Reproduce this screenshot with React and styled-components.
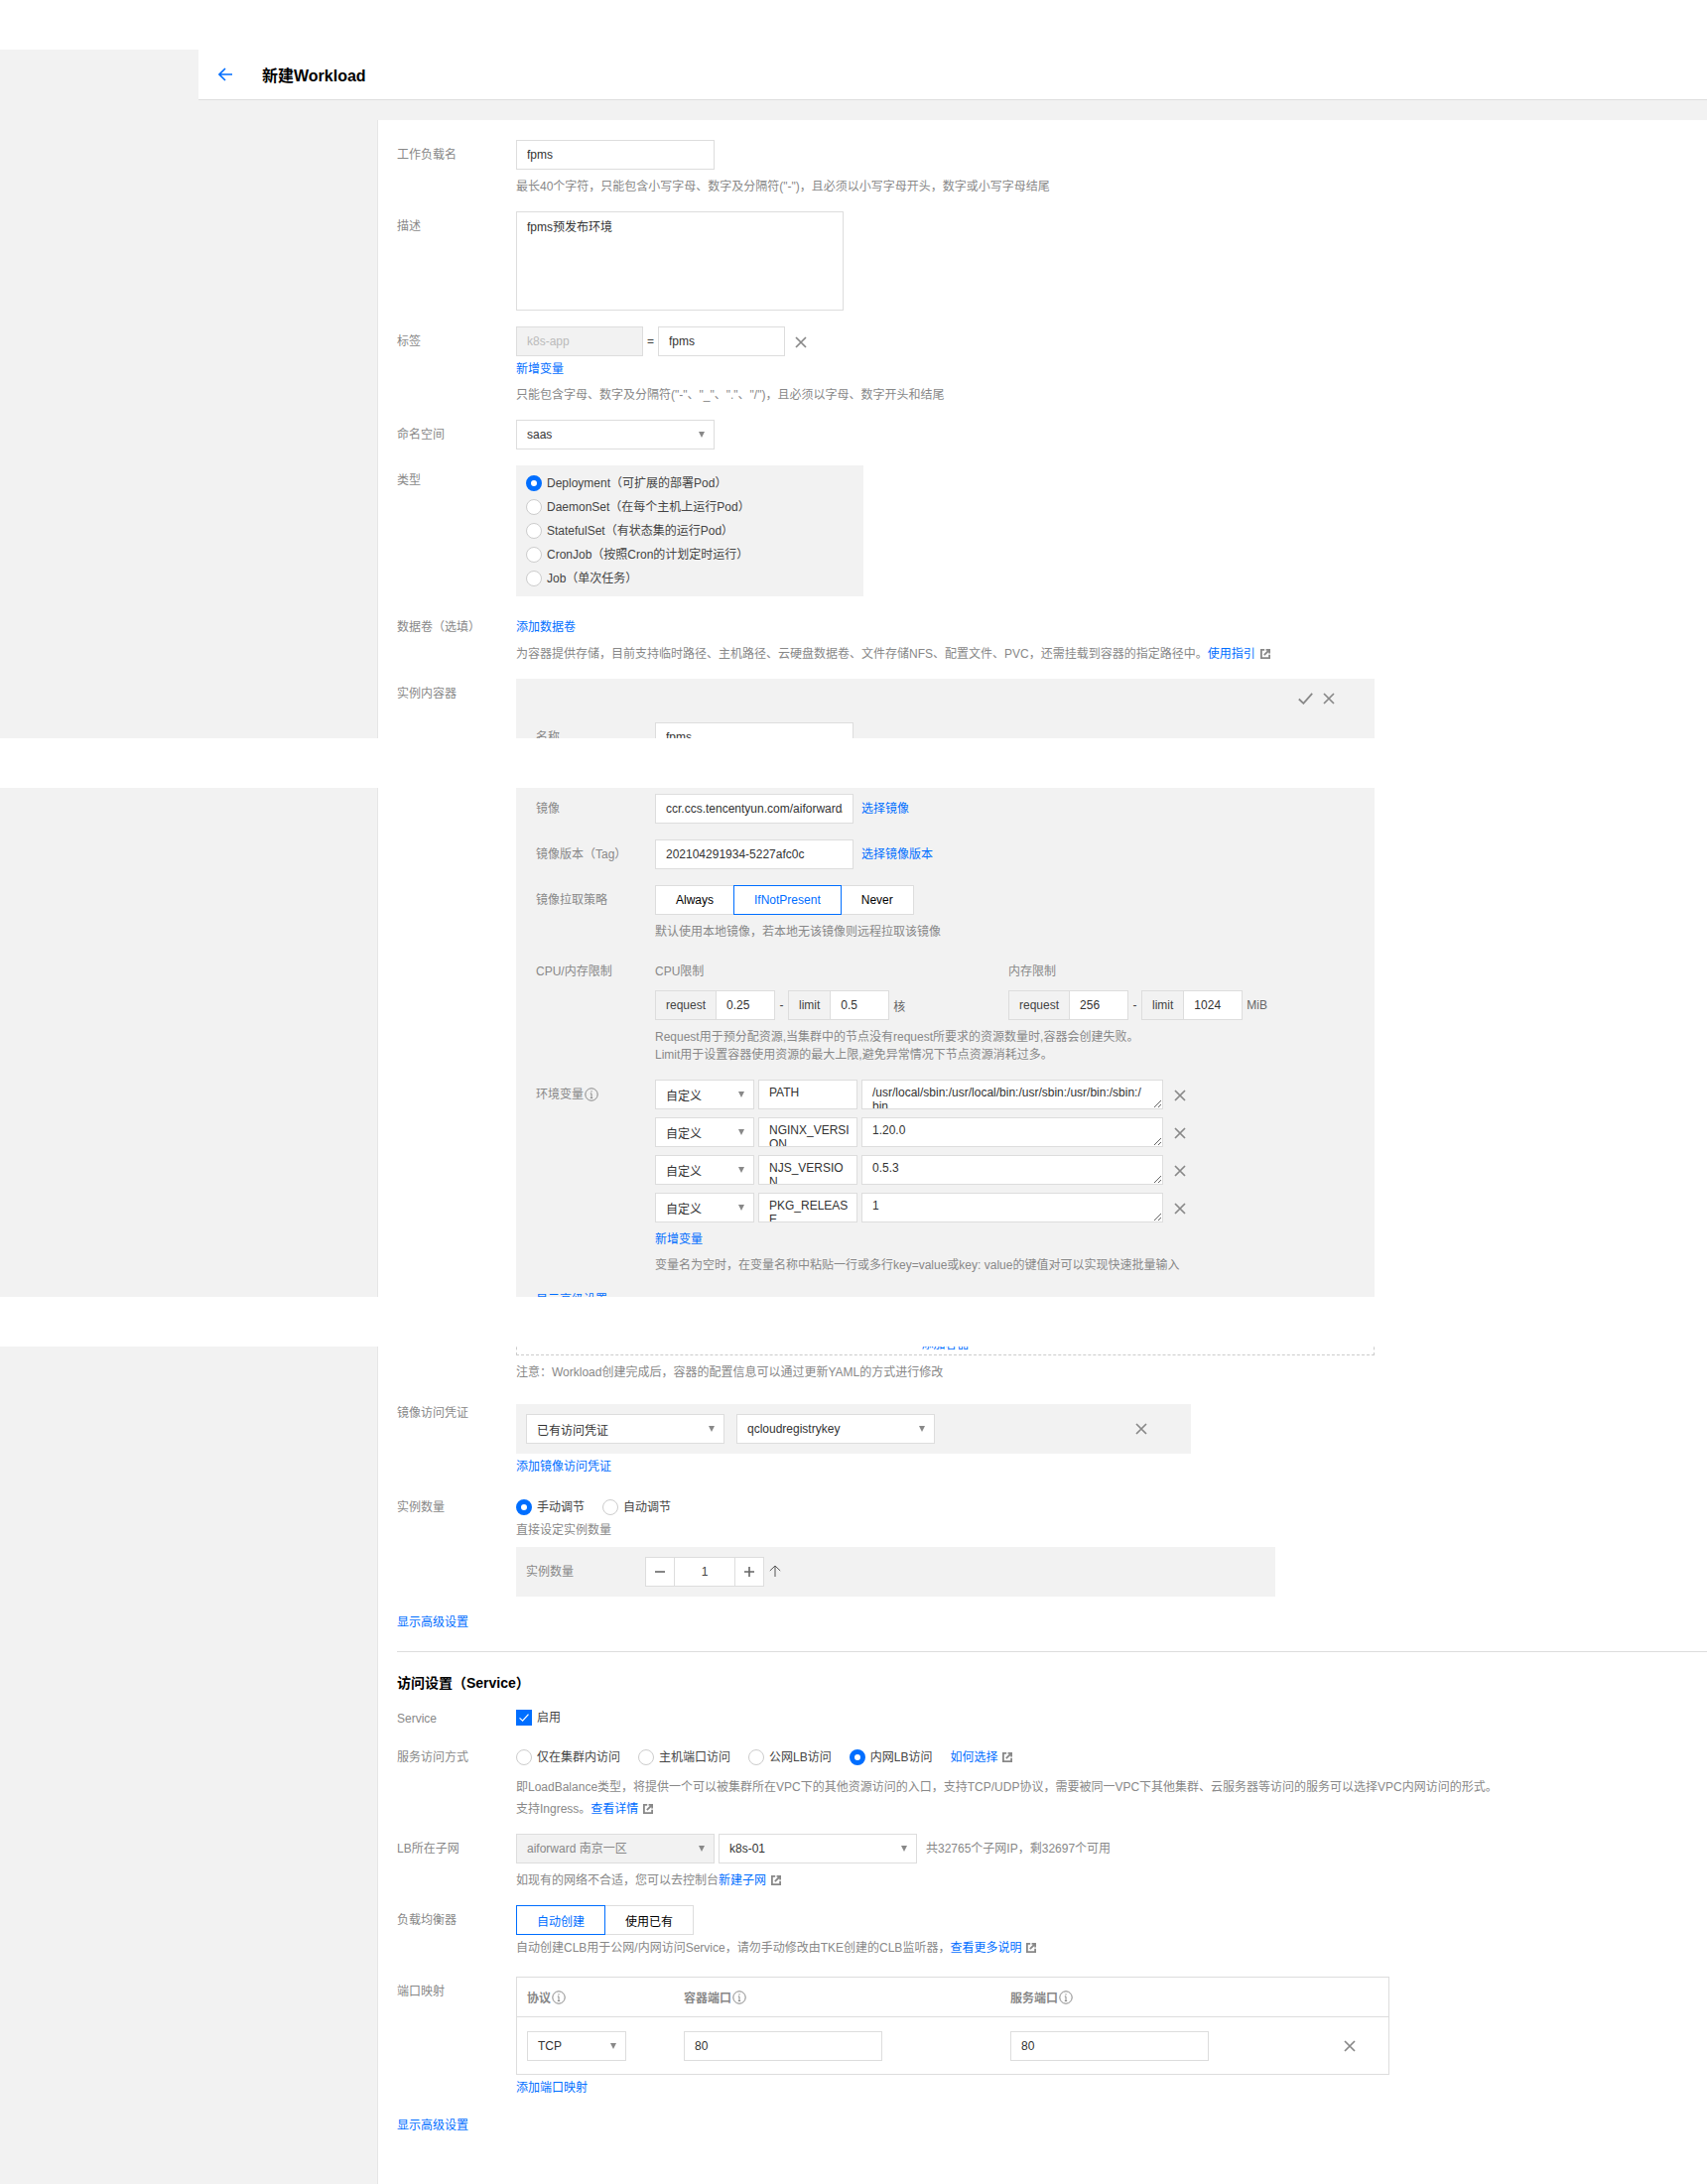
import React from 'react';
import styled, { createGlobalStyle } from 'styled-components';

const GlobalStyle = createGlobalStyle`
  html, body {
    margin: 0;
    padding: 0;
    background: #fff;
  }

  body {
    font-family: "Liberation Sans", "Noto Sans CJK SC", sans-serif;
    font-size: 12px;
    color: #444;
  }

  *, *::before, *::after {
    box-sizing: border-box;
  }
`;

const Page = styled.div`
  width: 1720px;
  height: 2201px;
  display: flex;
  flex-direction: column;
  overflow: hidden;
`;

const TopBlank = styled.div`
  height: 50px;
  flex: none;
  background: #fff;
`;

const Band = styled.div`
  height: 50px;
  flex: none;
  background: #fff;
`;

// one captured piece of the long page, cut off at its own height
const Slice = styled.section`
  flex: none;
  height: ${(p) => p.$height}px;
  overflow: hidden;
  background: #f2f2f2;
  padding-left: ${(p) => p.$left}px;
`;

const Header = styled.header`
  height: 51px;
  display: flex;
  align-items: center;
  background: #fff;
  border-bottom: 1px solid #ddd;
  padding-left: 20px;
`;

const BackButton = styled.a`
  display: flex;
  width: 14px;
  height: 14px;
  margin-right: 30px;
  color: #006eff;
`;

const Title = styled.h1`
  margin: 0 0 1px;
  font-size: 16px;
  font-weight: 700;
  color: #000;
`;

const Body = styled.div`
  padding: 20px 0 0 180px;
`;

const Panel = styled.main`
  background: #fff;
  border-left: 1px solid #e6e6e6;
  padding: ${(p) => p.$top || 0}px 0 2000px 19px;
`;

const Row = styled.div`
  display: grid;
  grid-template-columns: 120px 1fr;
  margin-top: ${(p) => p.$top || 0}px;
`;

const Label = styled.label`
  color: #888;
  line-height: ${(p) => p.$lh || 30}px;
  display: flex;
  align-items: ${(p) => (p.$lh ? 'flex-start' : 'center')};
  align-self: start;
  gap: 1px;
  height: ${(p) => p.$lh || 30}px;
`;

const Field = styled.div`
  min-width: 0;
`;

const Line = styled.div`
  display: flex;
  align-items: center;
  min-height: ${(p) => p.$h || 30}px;
  line-height: ${(p) => p.$h || 30}px;
  gap: ${(p) => p.$gap || 0}px;
`;

const Hint = styled.p`
  margin: ${(p) => (p.$top === undefined ? 8 : p.$top)}px 0 0;
  color: #888;
  line-height: ${(p) => p.$lh || 18}px;
  white-space: nowrap;
`;

const LinkText = styled.a`
  color: #006eff;
  text-decoration: none;
  line-height: 18px;
  display: ${(p) => (p.$block ? 'block' : 'inline')};
  margin-top: ${(p) => p.$top || 0}px;
  white-space: nowrap;
`;

const ExternalMark = styled.span`
  display: inline-flex;
  vertical-align: -1px;
  width: 10px;
  height: 10px;
  margin-left: 5px;
  color: #888;
`;

const TextInput = styled.input`
  display: block;
  width: ${(p) => p.$width || 200}px;
  height: 30px;
  padding: 0 10px;
  margin: 0;
  border: 1px solid #ddd;
  border-radius: 0;
  outline: none;
  background: ${(p) => (p.$disabled ? '#f2f2f2' : '#fff')};
  color: ${(p) => (p.$disabled ? '#bbb' : '#333')};
  font: inherit;
  font-size: 12px;
`;

const TextBox = styled.textarea`
  display: block;
  width: ${(p) => p.$width}px;
  height: ${(p) => p.$height || 30}px;
  margin: 0;
  padding: ${(p) => p.$pad || '5px 10px'};
  border: 1px solid #ddd;
  border-radius: 0;
  outline: none;
  background: #fff;
  color: #333;
  font: inherit;
  font-size: 12px;
  line-height: 14px;
  overflow: hidden;
  resize: ${(p) => (p.$grip ? 'both' : 'none')};
`;

const Select = styled.div`
  display: flex;
  align-items: center;
  justify-content: space-between;
  flex: none;
  width: ${(p) => p.$width || 200}px;
  height: 30px;
  padding: 0 10px;
  border: 1px solid #ddd;
  background: ${(p) => (p.$disabled ? '#f2f2f2' : '#fff')};
  color: ${(p) => (p.$disabled ? '#888' : '#333')};
  white-space: nowrap;

  &::after {
    content: '';
    width: 0;
    height: 0;
    margin-right: -1px;
    border-left: 3.5px solid transparent;
    border-right: 3.5px solid transparent;
    border-top: 6px solid #888;
  }
`;

const GrayBox = styled.div`
  background: #f2f2f2;
  width: ${(p) => p.$width}px;
  padding: ${(p) => p.$pad};
`;

const RadioStack = styled(GrayBox)`
  display: flex;
  flex-direction: column;
  gap: 8px;
`;

const RadioLabel = styled.span`
  display: inline-flex;
  align-items: center;
  gap: 5px;
  height: 16px;
  line-height: 16px;
  color: #444;
  white-space: nowrap;

  &::before {
    content: '';
    flex: none;
    width: 16px;
    height: 16px;
    border-radius: 50%;
    background: #fff;
    border: ${(p) => (p.$on ? '5px solid #006eff' : '1px solid #ccc')};
  }
`;

const Actions = styled.div`
  display: flex;
  justify-content: flex-end;
  align-items: center;
  gap: 10px;
  height: 20px;
  margin: 0 40px 14px 0;
  color: #888;
`;

const IconSlot = styled.span`
  display: inline-flex;
  flex: none;
  width: ${(p) => p.$size || 12}px;
  height: ${(p) => p.$size || 12}px;
  color: ${(p) => p.$color || '#888'};
  margin-left: ${(p) => p.$left || 0}px;
  margin-top: ${(p) => p.$down || 0}px;
`;

const CheckMark = styled.span`
  display: inline-flex;
  flex: none;
  width: 15px;
  height: 12px;
  color: #888;
`;

const InnerRow = styled(Row)`
  padding-left: 20px;
`;

const Segment = styled.div`
  display: flex;
  height: 30px;
`;

const SegmentButton = styled.button`
  height: 30px;
  margin: 0 0 0 -1px;
  padding: 0 20px;
  border: 1px solid ${(p) => (p.$on ? '#006eff' : '#ddd')};
  border-radius: 0;
  background: #fff;
  color: ${(p) => (p.$on ? '#006eff' : '#000')};
  font: inherit;
  position: relative;
  z-index: ${(p) => (p.$on ? 1 : 0)};

  &:first-child {
    margin-left: 0;
  }
`;

const ResourceGrid = styled.div`
  display: grid;
  grid-template-columns: 356px 1fr;
`;

const ColumnTitle = styled.div`
  color: #888;
  line-height: 30px;
`;

const GroupLine = styled.div`
  display: flex;
  align-items: center;
  margin-top: 4px;
  height: 30px;
`;

const Addon = styled.span`
  display: flex;
  align-items: center;
  height: 30px;
  padding: 0 10px;
  border: 1px solid #ddd;
  border-right: 0;
  background: #f2f2f2;
  color: #444;
`;

const Dash = styled.span`
  width: ${(p) => p.$width || 13}px;
  text-align: center;
  color: #444;
`;

const Unit = styled.span`
  margin-left: 4px;
  color: #666;
`;

const EnvList = styled.div`
  display: flex;
  flex-direction: column;
  gap: 8px;
`;

const EnvRow = styled.div`
  display: flex;
  align-items: center;
  gap: 4px;
`;

const DashedBox = styled.div`
  width: 865px;
  height: 20px;
  margin-top: -11px;
  border: 1px dashed #ccc;
  border-top: 0;
  text-align: center;
  line-height: 18px;
`;

const CredentialBox = styled(GrayBox)`
  display: flex;
  align-items: center;
  gap: 12px;
`;

const Spacer = styled.span`
  flex: 1;
`;

const Stepper = styled.div`
  display: flex;
  height: 30px;
`;

const StepButton = styled.button`
  width: 30px;
  height: 30px;
  margin: 0;
  padding: 0;
  display: flex;
  align-items: center;
  justify-content: center;
  background: #fff;
  border: 1px solid #ddd;
  color: #666;
`;

const StepValue = styled.input`
  width: 62px;
  height: 30px;
  margin: 0 -1px;
  border: 1px solid #ddd;
  border-radius: 0;
  outline: none;
  text-align: center;
  font: inherit;
  color: #444;
  background: #fff;
`;

const InstanceBox = styled(GrayBox)`
  display: grid;
  grid-template-columns: 120px auto;
  justify-content: start;
  margin-top: 8px;
`;

const Divider = styled.hr`
  height: 1px;
  margin: 20px 0 0;
  border: 0;
  background: #ddd;
`;

const SectionTitle = styled.h2`
  margin: 21px 0 0;
  font-size: 14px;
  line-height: 20px;
  font-weight: 700;
  color: #000;
`;

const CheckBox = styled.span`
  display: inline-flex;
  align-items: center;
  justify-content: center;
  flex: none;
  width: 16px;
  height: 16px;
  background: #006eff;
  color: #fff;
`;

const CheckLabel = styled.span`
  display: inline-flex;
  align-items: center;
  gap: 5px;
  margin-top: -2px;
`;

const InlineNote = styled.span`
  margin-left: 5px;
  color: #888;
  white-space: nowrap;
`;

const PortTable = styled.div`
  width: 880px;
  height: 99px;
  border: 1px solid #ddd;
`;

const PortRow = styled.div`
  display: grid;
  grid-template-columns: 158px 329px 1fr 45px;
  align-items: center;
  padding-left: 10px;
  height: ${(p) => p.$height}px;
  border-bottom: ${(p) => (p.$head ? '1px solid #ddd' : '0')};
`;

const PortHead = styled.span`
  display: flex;
  align-items: center;
  gap: 1px;
  color: #888;
  font-weight: 700;
`;

const Close = () => (
  <svg viewBox="0 0 12 12" width="100%" height="100%" fill="none" stroke="currentColor" strokeWidth="1.7">
    <path d="M1 1l10 10M11 1L1 11" />
  </svg>
);

const Check = () => (
  <svg viewBox="0 0 15 12" width="100%" height="100%" fill="none" stroke="currentColor" strokeWidth="1.8">
    <path d="M.8 6.5l4.6 4.3L14.2.8" />
  </svg>
);

const Info = () => (
  <svg viewBox="0 0 14 14" width="14" height="14" fill="none" stroke="#888" strokeWidth="1">
    <circle cx="7" cy="7" r="6.2" />
    <path d="M7 6v4.5M5.8 6h1.2M5.8 10.5h2.4" />
    <circle cx="7" cy="3.9" r=".7" fill="#888" stroke="none" />
  </svg>
);

const External = () => (
  <ExternalMark>
    <svg viewBox="0 0 10 10" width="10" height="10" fill="none" stroke="currentColor" strokeWidth="1.8">
      <path d="M4.2.9H.9v8.2h8.2V5.8" />
      <path d="M3.8 6.2L9 1" />
      <path d="M5.6.9h3.5v3.5" />
    </svg>
  </ExternalMark>
);

const Back = () => (
  <svg viewBox="0 0 14 14" width="14" height="14" fill="none" stroke="currentColor" strokeWidth="1.6">
    <path d="M14 7H1.5M7 1L1 7l6 6" />
  </svg>
);

const ENV_ROWS = [
  { name: 'PATH', value: '/usr/local/sbin:/usr/local/bin:/usr/sbin:/usr/bin:/sbin:/\nbin' },
  { name: 'NGINX_VERSION', value: '1.20.0' },
  { name: 'NJS_VERSION', value: '0.5.3' },
  { name: 'PKG_RELEASE', value: '1' },
];

const WORKLOAD_TYPES = [
  'Deployment（可扩展的部署Pod）',
  'DaemonSet（在每个主机上运行Pod）',
  'StatefulSet（有状态集的运行Pod）',
  'CronJob（按照Cron的计划定时运行）',
  'Job（单次任务）',
];

const ResourceLimit = ({ title, request, limit, unit }) => (
  <div>
    <ColumnTitle>{title}</ColumnTitle>
    <GroupLine>
      <Addon>request</Addon>
      <TextInput $width={60} readOnly value={request} />
      <Dash>-</Dash>
      <Addon>limit</Addon>
      <TextInput $width={60} readOnly value={limit} />
      <Unit>{unit}</Unit>
    </GroupLine>
  </div>
);

const App = () => (
  <Page>
    <GlobalStyle />
    <TopBlank />
    <Slice $height={694} $left={200}>
      <Header>
        <BackButton href="#" aria-label="back">
          <Back />
        </BackButton>
        <Title>新建Workload</Title>
      </Header>
      <Body>
        <Panel $top={20}>
          <Row>
            <Label>工作负载名</Label>
            <Field>
              <TextInput readOnly value="fpms" />
              <Hint>最长40个字符，只能包含小写字母、数字及分隔符("-")，且必须以小写字母开头，数字或小写字母结尾</Hint>
            </Field>
          </Row>
          <Row $top={16}>
            <Label>描述</Label>
            <Field>
              <TextBox $width={330} $height={100} $pad="8px 10px" readOnly defaultValue="fpms预发布环境" />
            </Field>
          </Row>
          <Row $top={16}>
            <Label>标签</Label>
            <Field>
              <Line>
                <TextInput $width={128} $disabled readOnly value="k8s-app" />
                <Dash $width={15}>=</Dash>
                <TextInput $width={128} readOnly value="fpms" />
                <IconSlot $size={12} $left={10} $down={2}><Close /></IconSlot>
              </Line>
              <LinkText href="#" $block $top={4}>新增变量</LinkText>
              <Hint>只能包含字母、数字及分隔符("-"、"_"、"."、"/")，且必须以字母、数字开头和结尾</Hint>
            </Field>
          </Row>
          <Row $top={16}>
            <Label>命名空间</Label>
            <Field>
              <Select>saas</Select>
            </Field>
          </Row>
          <Row $top={16}>
            <Label>类型</Label>
            <Field>
              <RadioStack $width={350} $pad="10px">
                {WORKLOAD_TYPES.map((type, i) => (
                  <RadioLabel key={type} $on={i === 0}>{type}</RadioLabel>
                ))}
              </RadioStack>
            </Field>
          </Row>
          <Row $top={16}>
            <Label>数据卷（选填）</Label>
            <Field>
              <Line>
                <LinkText href="#">添加数据卷</LinkText>
              </Line>
              <Hint $top={3}>
                为容器提供存储，目前支持临时路径、主机路径、云硬盘数据卷、文件存储NFS、配置文件、PVC，还需挂载到容器的指定路径中。
                <LinkText href="#">使用指引</LinkText>
                <External />
              </Hint>
            </Field>
          </Row>
          <Row $top={16}>
            <Label>实例内容器</Label>
            <Field>
              <GrayBox $width={865} $pad="10px 0 60px">
                <Actions>
                  <CheckMark><Check /></CheckMark>
                  <IconSlot $size={12}><Close /></IconSlot>
                </Actions>
                <InnerRow>
                  <Label>名称</Label>
                  <TextInput readOnly value="fpms" />
                </InnerRow>
              </GrayBox>
            </Field>
          </Row>
        </Panel>
      </Body>
    </Slice>

    <Band />

    <Slice $height={513} $left={380}>
      <Panel>
        <Row>
          <span />
          <GrayBox $width={865} $pad="6px 0 200px 20px">
            <Row>
              <Label>镜像</Label>
              <Line $gap={8}>
                <TextInput readOnly value="ccr.ccs.tencentyun.com/aiforward/fpms" />
                <LinkText href="#">选择镜像</LinkText>
              </Line>
            </Row>
            <Row $top={16}>
              <Label>镜像版本（Tag）</Label>
              <Line $gap={8}>
                <TextInput readOnly value="202104291934-5227afc0c" />
                <LinkText href="#">选择镜像版本</LinkText>
              </Line>
            </Row>
            <Row $top={16}>
              <Label>镜像拉取策略</Label>
              <Field>
                <Segment>
                  <SegmentButton>Always</SegmentButton>
                  <SegmentButton $on>IfNotPresent</SegmentButton>
                  <SegmentButton>Never</SegmentButton>
                </Segment>
                <Hint>默认使用本地镜像，若本地无该镜像则远程拉取该镜像</Hint>
              </Field>
            </Row>
            <Row $top={16}>
              <Label>CPU/内存限制</Label>
              <Field>
                <ResourceGrid>
                  <ResourceLimit title="CPU限制" request="0.25" limit="0.5" unit="核" />
                  <ResourceLimit title="内存限制" request="256" limit="1024" unit="MiB" />
                </ResourceGrid>
                <Hint>
                  Request用于预分配资源,当集群中的节点没有request所要求的资源数量时,容器会创建失败。
                  <br />
                  Limit用于设置容器使用资源的最大上限,避免异常情况下节点资源消耗过多。
                </Hint>
              </Field>
            </Row>
            <Row $top={16}>
              <Label>环境变量<Info /></Label>
              <Field>
                <EnvList>
                  {ENV_ROWS.map((env) => (
                    <EnvRow key={env.name}>
                      <Select $width={100}>自定义</Select>
                      <TextBox $width={100} $pad="5px 7px 5px 10px" readOnly defaultValue={env.name} />
                      <TextBox $width={304} $grip readOnly defaultValue={env.value} />
                      <IconSlot $size={12} $left={7} $down={2}><Close /></IconSlot>
                    </EnvRow>
                  ))}
                </EnvList>
                <LinkText href="#" $block $top={8}>新增变量</LinkText>
                <Hint>变量名为空时，在变量名称中粘贴一行或多行key=value或key: value的键值对可以实现快速批量输入</Hint>
              </Field>
            </Row>
            <LinkText href="#" $block $top={17}>显示高级设置</LinkText>
          </GrayBox>
        </Row>
      </Panel>
    </Slice>

    <Band />

    <Slice $height={844} $left={380}>
      <Panel>
        <Row>
          <span />
          <Field>
            <DashedBox>
              <LinkText href="#">添加容器</LinkText>
            </DashedBox>
            <Hint>注意：Workload创建完成后，容器的配置信息可以通过更新YAML的方式进行修改</Hint>
          </Field>
        </Row>
        <Row $top={23}>
          <Label $lh={18}>镜像访问凭证</Label>
          <Field>
            <CredentialBox $width={680} $pad="10px 44px 10px 10px">
              <Select>已有访问凭证</Select>
              <Select>qcloudregistrykey</Select>
              <Spacer />
              <IconSlot $size={12}><Close /></IconSlot>
            </CredentialBox>
            <LinkText href="#" $block $top={4}>添加镜像访问凭证</LinkText>
          </Field>
        </Row>
        <Row $top={21}>
          <Label $lh={22}>实例数量</Label>
          <Field>
            <Line $h={22} $gap={18}>
              <RadioLabel $on>手动调节</RadioLabel>
              <RadioLabel>自动调节</RadioLabel>
            </Line>
            <Hint $top={3}>直接设定实例数量</Hint>
            <InstanceBox $width={765} $pad="10px">
              <Label>实例数量</Label>
              <Line>
                <Stepper>
                  <StepButton aria-label="minus">
                    <svg viewBox="0 0 10 10" width="10" height="10" fill="none" stroke="currentColor" strokeWidth="1.6">
                      <path d="M0 5h10" />
                    </svg>
                  </StepButton>
                  <StepValue readOnly value="1" />
                  <StepButton aria-label="plus">
                    <svg viewBox="0 0 10 10" width="10" height="10" fill="none" stroke="currentColor" strokeWidth="1.6">
                      <path d="M0 5h10M5 0v10" />
                    </svg>
                  </StepButton>
                </Stepper>
                <IconSlot $size={12} $left={5} $down={-3} $color="#555">
                  <svg viewBox="0 0 12 12" width="12" height="12" fill="none" stroke="currentColor" strokeWidth="1">
                    <path d="M6 12V1M.8 6L6 1l5.2 5" />
                  </svg>
                </IconSlot>
              </Line>
            </InstanceBox>
          </Field>
        </Row>
        <LinkText href="#" $block $top={17}>显示高级设置</LinkText>
        <Divider />
        <SectionTitle>访问设置（Service）</SectionTitle>
        <Row $top={11}>
          <Label>Service</Label>
          <Line>
            <CheckLabel>
              <CheckBox>
                <IconSlot $size={10} $color="#fff"><Check /></IconSlot>
              </CheckBox>
              启用
            </CheckLabel>
          </Line>
        </Row>
        <Row $top={9}>
          <Label>服务访问方式</Label>
          <Field>
            <Line $gap={18}>
              <RadioLabel>仅在集群内访问</RadioLabel>
              <RadioLabel>主机端口访问</RadioLabel>
              <RadioLabel>公网LB访问</RadioLabel>
              <RadioLabel $on>内网LB访问</RadioLabel>
              <span>
                <LinkText href="#">如何选择</LinkText>
                <External />
              </span>
            </Line>
            <Hint $top={4} $lh={22}>
              即LoadBalance类型，将提供一个可以被集群所在VPC下的其他资源访问的入口，支持TCP/UDP协议，需要被同一VPC下其他集群、云服务器等访问的服务可以选择VPC内网访问的形式。
              <br />
              支持Ingress。
              <LinkText href="#">查看详情</LinkText>
              <External />
            </Hint>
          </Field>
        </Row>
        <Row $top={14}>
          <Label>LB所在子网</Label>
          <Field>
            <Line $gap={4}>
              <Select $disabled>aiforward 南京一区</Select>
              <Select>k8s-01</Select>
              <InlineNote>共32765个子网IP，剩32697个可用</InlineNote>
            </Line>
            <Hint>
              如现有的网络不合适，您可以去控制台
              <LinkText href="#">新建子网</LinkText>
              <External />
            </Hint>
          </Field>
        </Row>
        <Row $top={16}>
          <Label>负载均衡器</Label>
          <Field>
            <Segment>
              <SegmentButton $on>自动创建</SegmentButton>
              <SegmentButton>使用已有</SegmentButton>
            </Segment>
            <Hint $top={4}>
              自动创建CLB用于公网/内网访问Service，请勿手动修改由TKE创建的CLB监听器，
              <LinkText href="#">查看更多说明</LinkText>
              <External />
            </Hint>
          </Field>
        </Row>
        <Row $top={20}>
          <Label>端口映射</Label>
          <Field>
            <PortTable>
              <PortRow $head $height={40}>
                <PortHead>协议<Info /></PortHead>
                <PortHead>容器端口<Info /></PortHead>
                <PortHead>服务端口<Info /></PortHead>
              </PortRow>
              <PortRow $height={57}>
                <Select $width={100}>TCP</Select>
                <TextInput readOnly value="80" />
                <TextInput readOnly value="80" />
                <IconSlot $size={12}><Close /></IconSlot>
              </PortRow>
            </PortTable>
            <LinkText href="#" $block $top={4}>添加端口映射</LinkText>
          </Field>
        </Row>
        <LinkText href="#" $block $top={20}>显示高级设置</LinkText>
      </Panel>
    </Slice>
  </Page>
);

export default App;
